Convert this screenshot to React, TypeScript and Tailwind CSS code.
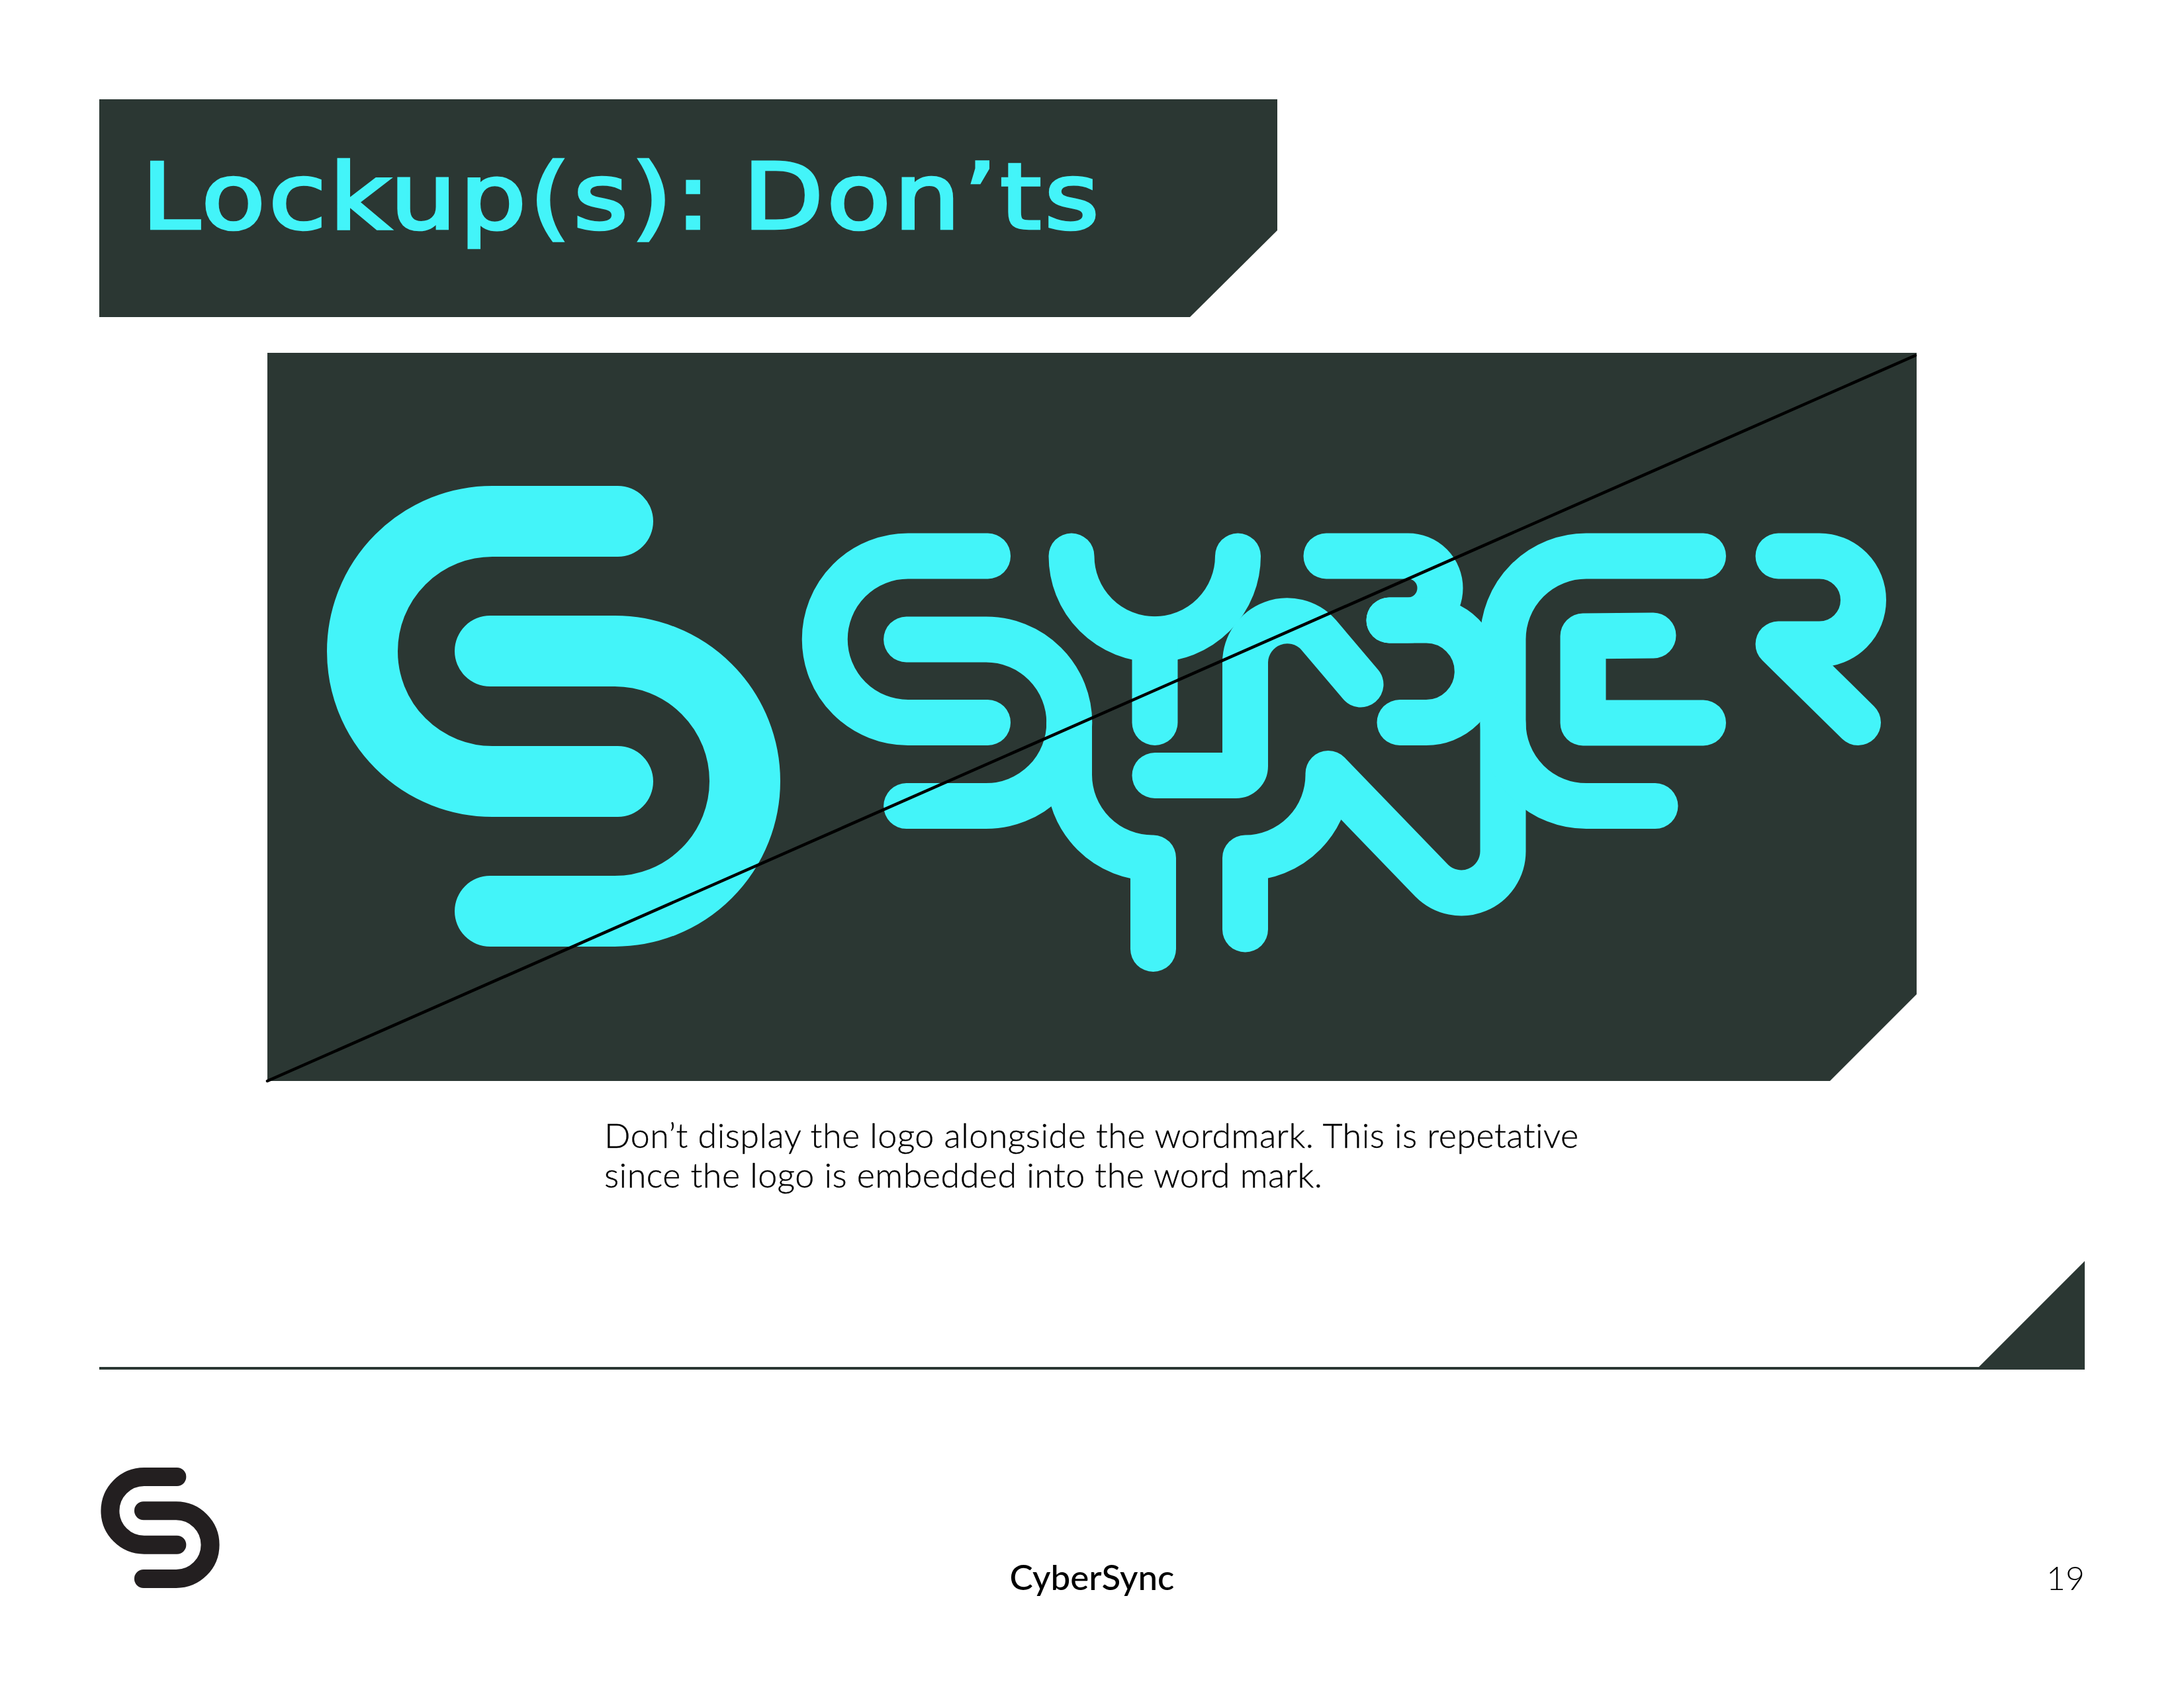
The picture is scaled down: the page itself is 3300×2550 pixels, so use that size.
const LOGO_C = "M933.5 787.5H744A196.5 196.5 0 0 0 744 1180.5H933.5";
const LOGO_S = "M740.5 983.5H929A196.5 196.5 0 0 1 929 1376.5H740.5";

const WORD = [
  // C
  "M1492.5 840H1372A125.75 125.75 0 0 0 1372 1091.5H1492.5",
  // S, its right side running down into the lower Y
  "M1369.6 966H1490A125.75 125.75 0 0 1 1490 1217.6H1369.6",
  "M1615.5 1092V1170A125.75 125.75 0 0 0 1741.25 1296H1742.5V1433.5",
  // upper Y
  "M1619 840A125.75 125.75 0 0 0 1870.5 840",
  "M1745 966V1091.5",
  // lower Y right stem into N, up into the long bar
  "M1881.5 1404V1296A125.75 125.75 0 0 0 2007 1168.5L2163.5 1330.5A63 63 0 0 0 2271 1286V966A125.75 125.75 0 0 1 2396.75 840H2573.5",
  // F lower bar
  "M2271 1092A125.75 125.75 0 0 0 2396.75 1217.6H2501",
  // A shape
  "M1745 1171.5H1867.5A14 14 0 0 0 1881.5 1157.5V1000.5A63.5 63.5 0 0 1 1992 958.6L2056 1034",
  // B
  "M2004 840H2127.5A48.5 48.5 0 0 1 2127.5 937H2099",
  "M2099 937H2155A77.25 77.25 0 0 1 2155 1091.5H2115",
  // E
  "M2498 960L2392 961V1092H2573.5",
  // R
  "M2687 840H2749A66.5 66.5 0 0 1 2749 973H2687L2807.5 1091.5",
];

function Mark({ className, color }: { className: string; color: string }) {
  return (
    <svg className={className} viewBox="494 734 685 696" fill="none" stroke={color} strokeWidth="107" strokeLinecap="round" strokeLinejoin="round">
      <path d={LOGO_C} />
      <path d={LOGO_S} />
    </svg>
  );
}

export default function App() {
  return (
    <div className="w-[3300px] h-[2550px] bg-white overflow-hidden pt-[150px] px-[150px] font-['Lato',sans-serif] text-black">
      <header className="w-[1780px] h-[329px] bg-[#2b3733] pl-[64px] pt-[76px] [clip-path:polygon(0_0,100%_0,100%_198px,1648px_100%,0_100%)]">
        <h1 className="w-max origin-left scale-x-[1.146] font-['DejaVu_Sans',sans-serif] font-normal text-[138px] leading-[144px] tracking-[4.3px] [word-spacing:-10px] text-[#43f4f9] [-webkit-text-stroke:4.5px_#43f4f9] whitespace-nowrap">
          Lockup(s): Don’ts
        </h1>
      </header>

      <section className="relative mt-[54px] ml-[254px] w-[2492px] h-[1100px]">
        <div className="absolute inset-0 bg-[#2b3733] [clip-path:polygon(0_0,100%_0,100%_969px,2361px_100%,0_100%)]" />
        <svg className="relative w-full h-full block overflow-visible" viewBox="404 533 2492 1100" fill="none">
          <g stroke="#43f4f9" strokeWidth="107" strokeLinecap="round" strokeLinejoin="round">
            <path d={LOGO_C} />
            <path d={LOGO_S} />
          </g>
          <g stroke="#43f4f9" strokeWidth="69" strokeLinecap="round" strokeLinejoin="round">
            {WORD.map((d, i) => (
              <path key={i} d={d} />
            ))}
          </g>
          <path d="M404 1633L2894 537" stroke="#000" strokeWidth="4.5" strokeLinecap="round" />
        </svg>
      </section>

      <p className="mt-[51px] ml-[763px] text-[52px] leading-[60px] tracking-[0.5px] font-light [-webkit-text-stroke:0.4px_#000] whitespace-nowrap">
        <span className="block">Don’t display the logo alongside the wordmark. This is repetative</span>
        <span className="block">since the logo is embedded into the word mark.</span>
      </p>

      <div className="mt-[101px] flex items-end">
        <div className="flex-1 h-[4px] bg-[#2b3733]" />
        <svg className="w-[160px] h-[164px] block" viewBox="0 0 160 164">
          <path d="M0 160L160 0V164H0Z" fill="#2b3733" />
        </svg>
      </div>

      <footer className="mt-[148px] grid grid-cols-[1fr_auto_1fr] items-start">
        <Mark className="w-[180px] h-[182px] ml-[2px] block" color="#231f20" />
        <div className="mt-[139px] text-[53px] leading-[52px] font-medium">CyberSync</div>
        <div className="mt-[141px] text-[50px] leading-[50px] font-light text-right">19</div>
      </footer>
    </div>
  );
}
